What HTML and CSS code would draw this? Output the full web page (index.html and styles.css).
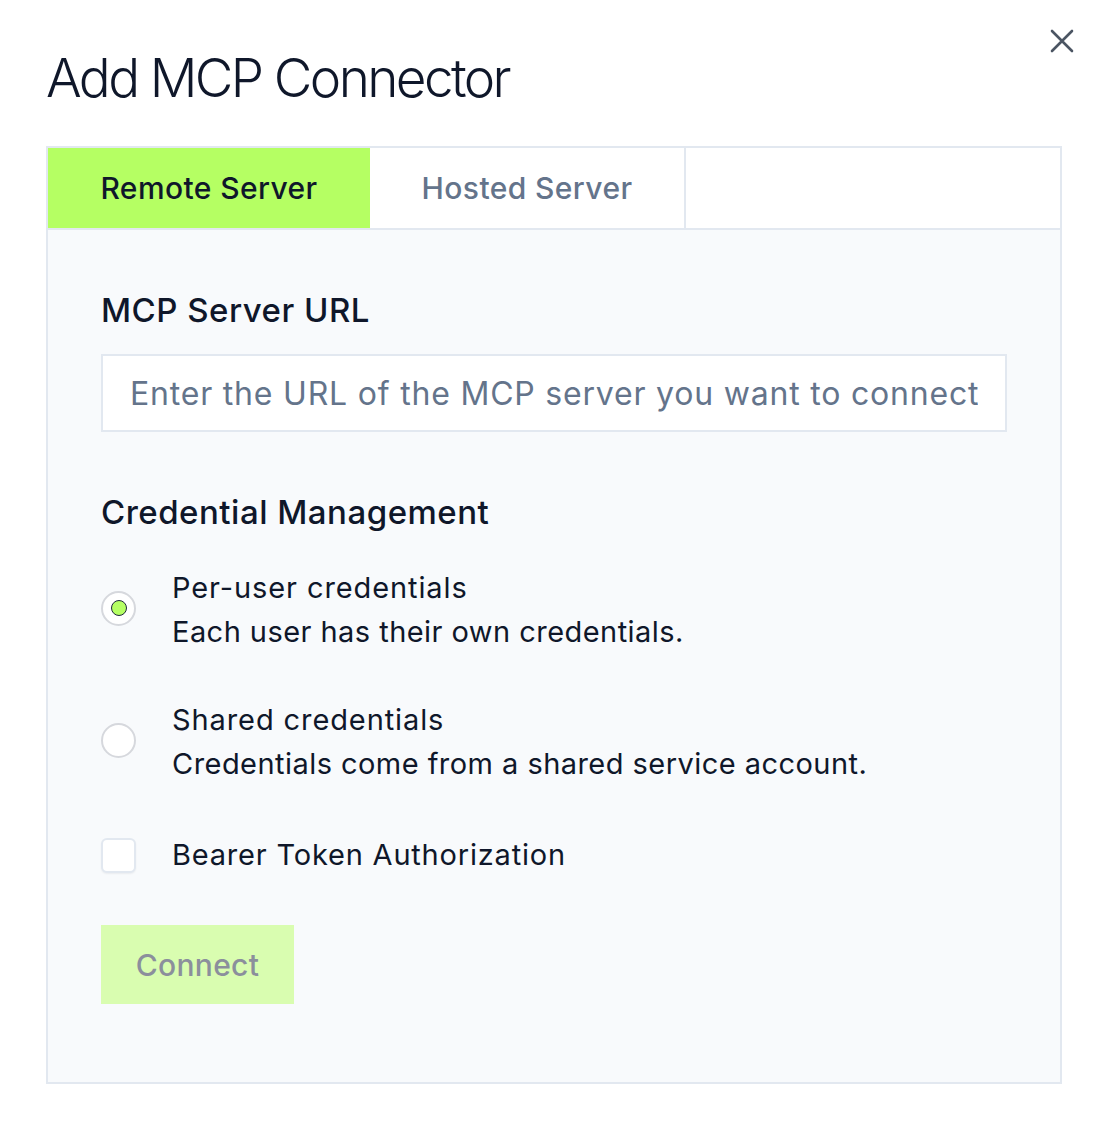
FILE: index.html
```html
<!DOCTYPE html>
<html lang="en">
<head>
<meta charset="utf-8">
<title>Add MCP Connector</title>
<link rel="stylesheet" href="styles.css">
</head>
<body>
<div class="dialog">
  <button class="close" aria-label="Close">
    <svg width="24" height="24" viewBox="0 0 24 24" fill="none" stroke="#4b5563" stroke-width="2.6" stroke-linecap="round"><path d="M2 2L22 22M22 2L2 22"/></svg>
  </button>
  <h1 class="title">Add MCP Connector</h1>
  <div class="card">
    <div class="tabs">
      <div class="tab active">Remote Server</div>
      <div class="tab">Hosted Server</div>
      <div class="tab-fill"></div>
    </div>
    <div class="body">
      <div class="label">MCP Server URL</div>
      <input class="input" type="text" placeholder="Enter the URL of the MCP server you want to connect">
      <div class="label section">Credential Management</div>
      <div class="options">
        <label class="option">
          <span class="radio checked"><span class="dot"></span></span>
          <span class="option-text">
            <span class="opt-title">Per-user credentials</span>
            <span class="opt-desc">Each user has their own credentials.</span>
          </span>
        </label>
        <label class="option">
          <span class="radio"></span>
          <span class="option-text">
            <span class="opt-title">Shared credentials</span>
            <span class="opt-desc">Credentials come from a shared service account.</span>
          </span>
        </label>
        <label class="option check-row">
          <span class="checkbox"></span>
          <span class="opt-title">Bearer Token Authorization</span>
        </label>
      </div>
      <button class="connect">Connect</button>
    </div>
  </div>
</div>
</body>
</html>
```
FILE: styles.css
```css
* { box-sizing: border-box; }
html, body { margin: 0; padding: 0; background: #ffffff; }
body {
  font-family: Inter, "Noto Sans", "Liberation Sans", sans-serif;
  color: #0f172a;
  width: 1104px;
  height: 1124px;
}
.dialog {
  position: relative;
  padding: 48px 42px 0 46px;
}
.close {
  position: absolute;
  top: 29px;
  right: 30px;
  width: 24px;
  height: 24px;
  padding: 0;
  border: 0;
  background: none;
  display: flex;
}
.title {
  margin: 0;
  font-size: 53px;
  font-weight: 300;
  line-height: 60px;
  letter-spacing: -2.6px;
  color: #0f172a;
}
.card {
  margin-top: 38px;
  width: 1016px;
  height: 938px;
  border: 2px solid #e2e8f0;
  background: #f8fafc;
  display: flex;
  flex-direction: column;
}
.tabs {
  display: flex;
  height: 82px;
  border-bottom: 2px solid #e2e8f0;
  background: #ffffff;
}
.tab {
  display: flex;
  align-items: center;
  justify-content: center;
  font-size: 30px;
  font-weight: 500;
  letter-spacing: 0.4px;
  color: #64748b;
  border-right: 2px solid #e2e8f0;
}
.tab.active {
  width: 322px;
  background: #b5ff63;
  color: #0f172a;
  border-right: 0;
}
.tab:nth-child(2) { width: 316px; }
.tab-fill { flex: 1; }
.body {
  padding: 60px 53px 0 53px;
  display: flex;
  flex-direction: column;
  align-items: flex-start;
}
.label {
  font-size: 33px;
  font-weight: 500;
  line-height: 40px;
  letter-spacing: 0.5px;
  color: #0f172a;
}
.input {
  margin-top: 24px;
  width: 906px;
  height: 78px;
  border: 2px solid #e2e8f0;
  background: #ffffff;
  padding: 0 27px;
  font-family: inherit;
  font-size: 32px;
  letter-spacing: 0.8px;
  color: #0f172a;
  outline: none;
}
.input::placeholder { color: #64748b; }
.section { margin-top: 60px; }
.options {
  margin-top: 34px;
  display: flex;
  flex-direction: column;
  gap: 44px;
}
.option {
  display: flex;
  align-items: center;
  gap: 36px;
}
.option-text {
  display: flex;
  flex-direction: column;
}
.opt-title, .opt-desc {
  font-size: 29px;
  line-height: 44px;
  color: #0f172a;
  letter-spacing: 0.45px;
}
.option-text .opt-title { letter-spacing: 0.9px; }
.check-row .opt-title { letter-spacing: 0.8px; }
.radio {
  width: 35px;
  height: 35px;
  border-radius: 50%;
  border: 2px solid #d6d8dd;
  background: #ffffff;
  display: flex;
  align-items: center;
  justify-content: center;
  flex: none;
  margin-top: -4px;
}
.radio .dot {
  width: 16px;
  height: 16px;
  border-radius: 50%;
  background: #b5ff63;
  border: 1.5px solid #1e293b;
}
.check-row { margin-top: 3px; }
.checkbox {
  width: 35px;
  height: 35px;
  border-radius: 6px;
  border: 2px solid #e2e8f0;
  background: #ffffff;
  box-shadow: 0 1px 2px rgba(15,23,42,0.06);
  flex: none;
}
.connect {
  margin-top: 48px;
  width: 193px;
  height: 79px;
  border: 0;
  background: #d9fdb0;
  color: #8b8f9c;
  font-family: inherit;
  font-size: 30px;
  font-weight: 500;
  letter-spacing: 0.3px;
  padding: 0;
}
```
